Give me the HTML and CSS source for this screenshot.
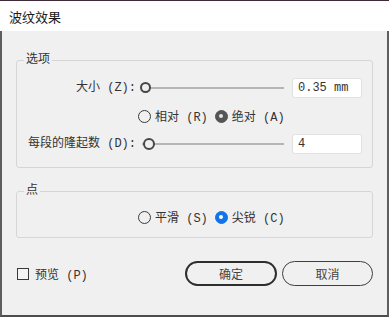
FILE: index.html
```html
<!DOCTYPE html>
<html lang="zh-CN">
<head>
<meta charset="utf-8">
<title>波纹效果</title>
<link rel="stylesheet" href="styles.css">
</head>
<body>
<div class="dialog">
  <div class="titlebar">波纹效果</div>
  <div class="body">
    <fieldset class="group group-options">
      <legend>选项</legend>
      <div class="grid">
        <div class="label">大小 (Z):</div>
        <div class="slider"><span class="track"></span><span class="thumb thumb-size"></span></div>
        <div class="input">0.35 mm</div>

        <div class="radios grid-radios">
          <span class="radio"><span class="dot"></span>相对 (R)</span>
          <span class="radio"><span class="dot dot-gray"></span>绝对 (A)</span>
        </div>

        <div class="label">每段的隆起数 (D):</div>
        <div class="slider"><span class="track track-ridges"></span><span class="thumb thumb-ridges"></span></div>
        <div class="input">4</div>
      </div>
    </fieldset>

    <fieldset class="group group-points">
      <legend>点</legend>
      <div class="radios points-radios">
        <span class="radio"><span class="dot"></span>平滑 (S)</span>
        <span class="radio"><span class="dot dot-blue"></span>尖锐 (C)</span>
      </div>
    </fieldset>

    <div class="footer">
      <span class="check"><span class="box"></span>预览 (P)</span>
      <div class="buttons">
        <span class="btn btn-primary">确定</span>
        <span class="btn">取消</span>
      </div>
    </div>
  </div>
</div>
</body>
</html>
```
FILE: styles.css
```css
* { box-sizing: border-box; }
html, body { margin: 0; padding: 0; background: #f0f0f0; }
body {
  width: 389px;
  height: 317px;
  overflow: hidden;
  font-family: "Liberation Mono", "Noto Sans CJK SC", monospace;
  font-size: 12px;
  color: #333;
}
.dialog {
  width: 389px;
  height: 317px;
  display: flex;
  flex-direction: column;
  border-top: 1px solid #3d2a38;
}
.titlebar {
  height: 30px;
  background: #fff;
  padding-left: 9px;
  display: flex;
  align-items: center;
  font-family: "Noto Sans CJK SC", sans-serif;
  font-size: 13px;
  color: #1a1a1a;
}
.body {
  flex: 1;
  background: #f0f0f0;
  border-left: 2px solid #5e5e5e;
  border-right: 2px solid #5e5e5e;
  border-bottom: 2px solid #4c4c4c;
  padding: 23px 14px 0 14px;
  display: flex;
  flex-direction: column;
}
.group {
  margin: 0;
  padding: 0;
  border: 1px solid #d6d6d6;
  border-radius: 3px;
  min-width: 0;
}
.group legend {
  margin-left: 7px;
  padding: 0 2px;
  line-height: 12px;
  font-size: 12px;
  color: #333;
}
.grid {
  display: grid;
  grid-template-columns: 121px 154px 70px;
  column-gap: 0;
  align-items: center;
  padding-top: 12px;
  padding-bottom: 13px;
  row-gap: 8px;
}
.label {
  text-align: right;
  white-space: nowrap;
  line-height: 20px;
  padding-right: 2px;
}
.slider {
  position: relative;
  height: 20px;
}
.track {
  position: absolute;
  left: 4px;
  right: 8px;
  top: 9px;
  height: 2px;
  background: #b5b5b5;
}
.thumb {
  position: absolute;
  top: 4px;
  width: 11px;
  height: 11px;
  border-radius: 50%;
  border: 2.5px solid #474747;
  background: #f0f0f0;
}
.thumb-size { left: 2px; }
.thumb-ridges { left: 5px; top: 4px; width: 12px; height: 12px; }
.input {
  height: 20px;
  background: #fff;
  border: 1px solid #e2e2e2;
  border-radius: 3px;
  padding-left: 5px;
  line-height: 18px;
  color: #333;
}
.radios {
  display: flex;
  align-items: center;
  gap: 7px;
  height: 20px;
}
.grid-radios {
  grid-column: 2 / 4;
  height: 20px;
}
.radio {
  display: inline-flex;
  align-items: center;
  gap: 4px;
  white-space: nowrap;
}
.dot {
  width: 13px;
  height: 13px;
  border-radius: 50%;
  border: 1px solid #3a3a3a;
  background: transparent;
  display: inline-block;
  position: relative;
}
.dot-gray {
  background: #555;
  border-color: #555;
}
.dot-gray::after,
.dot-blue::after {
  content: "";
  position: absolute;
  left: 50%;
  top: 50%;
  width: 4px;
  height: 4px;
  margin: -2px 0 0 -2px;
  border-radius: 50%;
  background: #fff;
}
.dot-gray::after { background: #e6e6e6; }
.dot-blue {
  background: #1473e6;
  border-color: #1473e6;
}
.group-points {
  margin-top: 17px;
}
.points-radios {
  padding-left: 121px;
  margin-top: 12px;
  margin-bottom: 12px;
  height: 16px;
}
.footer {
  margin-top: 23px;
  display: flex;
  align-items: center;
  justify-content: space-between;
  padding-left: 1px;
}
.check {
  display: inline-flex;
  align-items: center;
  gap: 6px;
  color: #333;
}
.box {
  width: 12px;
  height: 12px;
  border: 1px solid #3a3a3a;
  background: #f4f4f4;
  display: inline-block;
}
.buttons {
  display: flex;
  gap: 5px;
}
.btn {
  width: 91px;
  height: 25px;
  border: 1px solid #3f3f3f;
  border-radius: 13px;
  display: flex;
  align-items: center;
  justify-content: center;
  font-family: "Noto Sans CJK SC", sans-serif;
  font-size: 12px;
  color: #444;
}
.btn-primary {
  width: 92px;
  border: 2px solid #2e2e2e;
}
```
